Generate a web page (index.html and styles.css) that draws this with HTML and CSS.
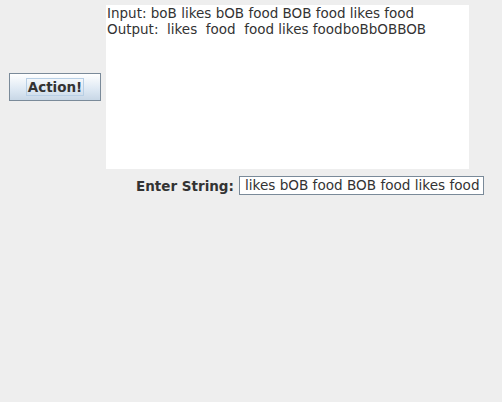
FILE: index.html
```html
<!DOCTYPE html>
<html>
<head>
<meta charset="utf-8">
<link rel="stylesheet" href="styles.css">
</head>
<body>
<div class="frame">
  <div class="top">
    <div class="left">
      <button class="action"><span class="focus">Action!</span></button>
    </div>
    <div class="area">Input: boB likes bOB food BOB food likes food
Output:  likes  food  food likes foodboBbOBBOB</div>
  </div>
  <div class="entry">
    <label class="lbl">Enter String:</label>
    <div class="field">likes bOB food BOB food likes food</div>
  </div>
</div>
</body>
</html>
```
FILE: styles.css
```css
html, body {
  margin: 0;
  padding: 0;
  background: #eeeeee;
  width: 502px;
  height: 402px;
  overflow: hidden;
}
.frame {
  font-family: "DejaVu Sans", sans-serif;
  font-size: 13.5px;
  color: #333333;
  padding-top: 5px;
}
.top {
  display: flex;
  align-items: center;
}
.left {
  width: 106px;
  display: flex;
  padding-left: 9px;
  box-sizing: border-box;
}
.action {
  width: 92px;
  height: 28px;
  padding: 0;
  margin: 0;
  border: 1px solid #7a8a99;
  background: linear-gradient(#ffffff, #dde8f3 60%, #c8d7e6);
  font-family: "DejaVu Sans", sans-serif;
  font-weight: bold;
  font-size: 13.5px;
  color: #333333;
  display: flex;
  align-items: center;
  justify-content: center;
}
.focus {
  border: 1px solid #b8cfe5;
  padding: 0 1px;
  line-height: 16px;
}
.area {
  width: 363px;
  height: 164px;
  background: #ffffff;
  white-space: pre;
  line-height: 16px;
  padding: 0 0 0 1px;
  box-sizing: border-box;
}
.entry {
  display: flex;
  align-items: center;
  margin-top: 7px;
  padding-left: 136px;
  gap: 5px;
}
.lbl {
  font-weight: bold;
  color: #333333;
}
.field {
  width: 245px;
  height: 19px;
  box-sizing: border-box;
  border: 1px solid #7a8a99;
  background: #ffffff;
  padding-left: 5px;
  font-size: 13.6px;
  line-height: 17px;
  white-space: pre;
  overflow: hidden;
}
```
